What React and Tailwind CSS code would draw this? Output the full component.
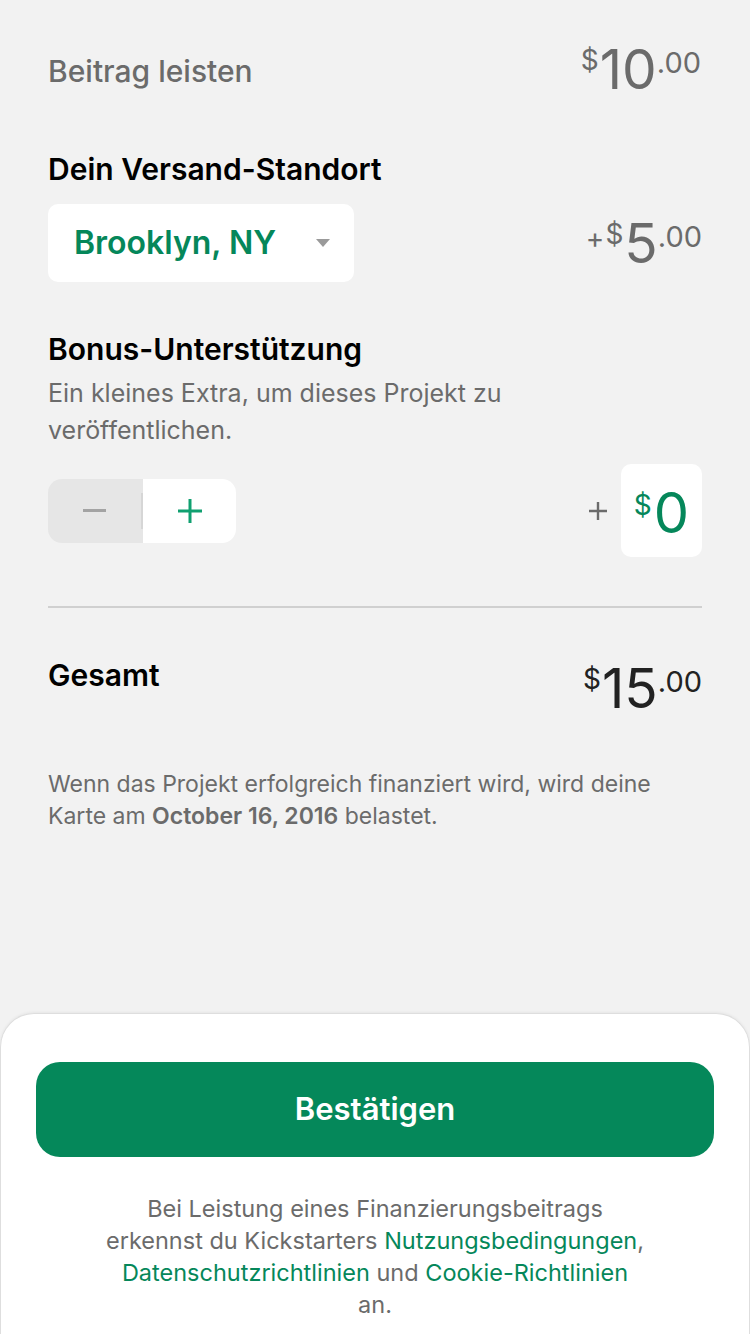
import { useState } from "react";

const font = { fontFamily: "Inter, 'Noto Sans', sans-serif" };

function Price({ whole, cents, prefix, className }) {
  return (
    <div className={`flex items-start leading-none ${className}`}>
      {prefix && <span className="text-[28px] mt-[8px] mr-[1px]">{prefix}</span>}
      <span className="text-[28px] mt-[4px] mr-[1px]">$</span>
      <span className="text-[55px]">{whole}</span>
      {cents && <span className="text-[29px] mt-[6px]">.{cents}</span>}
    </div>
  );
}

export default function App() {
  const [bonus, setBonus] = useState(0);

  return (
    <div className="min-h-[1334px] bg-[#f2f2f2] flex flex-col" style={font}>
      <div className="flex-1 px-[48px] pt-[42px]">
        {/* Beitrag */}
        <div className="flex justify-between items-start">
          <h2 className="text-[30px] leading-[36px] font-medium text-[#6b6b6b] mt-[11px]">Beitrag leisten</h2>
          <Price whole="10" cents="00" className="text-[#6b6b6b] mr-[1px]" />
        </div>

        {/* Versand */}
        <h3 className="mt-[54px] text-[30px] leading-[36px] font-semibold text-black">Dein Versand-Standort</h3>
        <div className="mt-[17px] flex justify-between items-start">
          <button className="h-[78px] w-[306px] bg-white rounded-[10px] flex items-center justify-between pl-[26px] pr-[24px]">
            <span className="text-[32px] font-semibold text-[#05875a]">Brooklyn, NY</span>
            <svg width="14" height="8" viewBox="0 0 14 8">
              <path d="M0 0h14L7 8z" fill="#9a9a9a" />
            </svg>
          </button>
          <Price prefix="+" whole="5" cents="00" className="text-[#6b6b6b] mt-[12px]" />
        </div>

        {/* Bonus */}
        <h3 className="mt-[49px] text-[30px] leading-[36px] font-semibold text-black">Bonus-Unterstützung</h3>
        <p className="mt-[8px] text-[25px] leading-[37px] text-[#6b6b6b] w-[520px]">
          Ein kleines Extra, um dieses Projekt zu veröffentlichen.
        </p>
        <div className="mt-[15px] flex justify-between items-center">
          <div className="flex h-[64px] w-[188px] rounded-[14px] overflow-hidden">
            <button
              onClick={() => setBonus(Math.max(0, bonus - 1))}
              className="w-[93px] h-full bg-[#e6e6e6] flex items-center justify-center"
            >
              <span className="block w-[23px] h-[3px] bg-[#a3a3a3]" />
            </button>
            <div className="w-[2px] h-full bg-[#e6e6e6] flex items-center">
              <div className="w-[2px] h-[36px] bg-[#d6d6d6]" />
            </div>
            <button
              onClick={() => setBonus(bonus + 1)}
              className="flex-1 bg-white flex items-center justify-center"
            >
              <svg width="24" height="24" viewBox="0 0 24 24">
                <path d="M12 0v24M0 12h24" stroke="#10a070" strokeWidth="3" />
              </svg>
            </button>
          </div>
          <div className="flex items-center">
            <svg width="18" height="18" viewBox="0 0 18 18" className="mr-[14px]">
              <path d="M9 0v18M0 9h18" stroke="#6b6b6b" strokeWidth="2.4" />
            </svg>
            <div className="h-[93px] w-[81px] bg-white rounded-[10px] flex items-start justify-center pt-[21px] text-[#05875a] leading-none">
              <span className="text-[28px] mt-[6px] mr-[2px]">$</span>
              <span className="text-[56px]">{bonus}</span>
            </div>
          </div>
        </div>

        <div className="mt-[49px] h-[2px] bg-[#d0d0d0]" />

        {/* Gesamt */}
        <div className="mt-[49px] flex justify-between items-start">
          <h3 className="text-[30px] leading-[36px] font-semibold text-black">Gesamt</h3>
          <Price whole={15 + bonus} cents="00" className="text-[#222] mt-[4px]" />
        </div>

        <p className="mt-[52px] text-[23px] leading-[32px] text-[#6b6b6b]">
          Wenn das Projekt erfolgreich finanziert wird, wird deine Karte am{" "}
          <span className="font-semibold">October 16, 2016</span> belastet.
        </p>
      </div>

      {/* Bottom sheet */}
      <div className="bg-white rounded-t-[34px] border-t border-x border-[#dedede] shadow-[0_-1px_3px_rgba(0,0,0,0.05)] px-[35px] pt-[48px] pb-[13px]">
        <button className="w-full h-[95px] rounded-[24px] bg-[#05885a] text-white text-[31px] font-semibold">
          Bestätigen
        </button>
        <p className="mt-[36px] text-center text-[23.5px] leading-[32px] text-[#6b6b6b]">
          Bei Leistung eines Finanzierungsbeitrags
          <br />
          erkennst du Kickstarters <span className="text-[#05875a]">Nutzungsbedingungen</span>,
          <br />
          <span className="text-[#05875a]">Datenschutzrichtlinien</span> und{" "}
          <span className="text-[#05875a]">Cookie-Richtlinien</span>
          <br />
          an.
        </p>
      </div>
    </div>
  );
}
